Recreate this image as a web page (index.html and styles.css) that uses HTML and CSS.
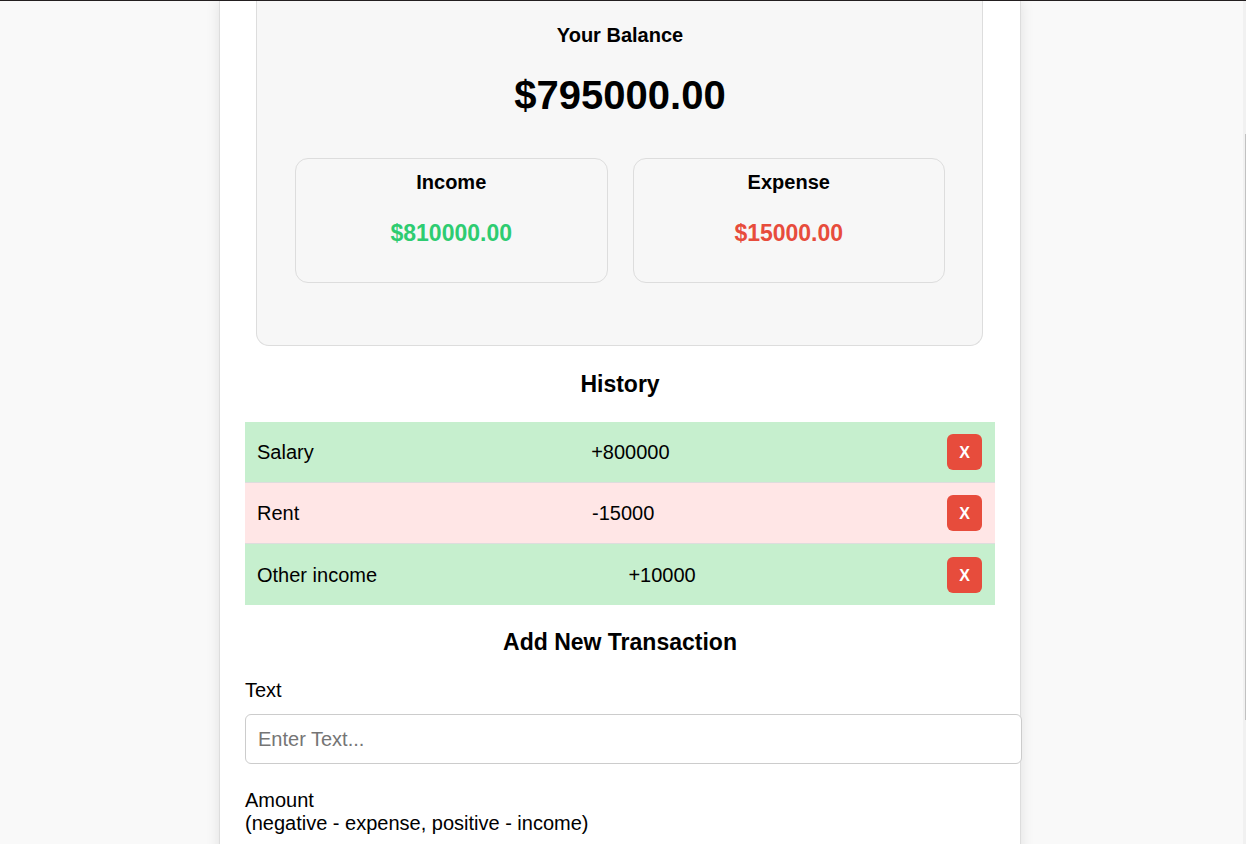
FILE: index.html
```html
<!DOCTYPE html>
<html lang="en">
<head>
<meta charset="utf-8">
<meta name="viewport" content="width=device-width, initial-scale=1">
<link rel="stylesheet" href="styles.css">
</head>
<body>
<main class="container">
  <section class="balance">
    <h2 class="label-title">Your Balance</h2>
    <p class="total">$795000.00</p>
    <div class="summary">
      <div class="card">
        <h3 class="label-title">Income</h3>
        <p class="money plus">$810000.00</p>
      </div>
      <div class="card">
        <h3 class="label-title">Expense</h3>
        <p class="money minus">$15000.00</p>
      </div>
    </div>
  </section>

  <h2 class="heading">History</h2>
  <ul class="history">
    <li class="item income"><span>Salary</span><span>+800000</span><button class="remove" type="button">X</button></li>
    <li class="item expense"><span>Rent</span><span>-15000</span><button class="remove" type="button">X</button></li>
    <li class="item income"><span>Other income</span><span>+10000</span><button class="remove" type="button">X</button></li>
  </ul>

  <h2 class="heading">Add New Transaction</h2>
  <form class="form">
    <div class="field">
      <label for="text">Text</label>
      <input class="input" id="text" type="text" placeholder="Enter Text...">
    </div>
    <div class="field">
      <label for="amount">Amount<br>(negative - expense, positive - income)</label>
      <input class="input" id="amount" type="text">
    </div>
  </form>
</main>
<div class="scrollbar"><div class="thumb"></div></div>
</body>
</html>
```
FILE: styles.css
```css
html {
  overflow: hidden;
  background: #f9f9f9;
}

body {
  margin: 0;
  padding-right: 6px;
  height: 100vh;
  box-sizing: border-box;
  overflow: hidden;
  border-top: 1px solid #231f20;
  background: #f9f9f9;
  color: #000;
  font-family: "Liberation Sans", Arial, sans-serif;
  font-size: 20px;
  line-height: 23px;
}

h2,
h3,
p,
ul {
  margin: 0;
  padding: 0;
}

.container {
  max-width: 750px;
  min-height: 100vh;
  margin: 0 auto;
  padding: 0 25px;
  background: #fff;
  border: solid #ddd;
  border-width: 0 1px;
  box-shadow: 0 0 13px rgba(0, 0, 0, 0.1);
}

.balance {
  margin: 0 12px 0 11px;
  padding: 23px 37px 62px 38px;
  background: #f7f7f7;
  border: 1px solid #ddd;
  border-top: 0;
  border-radius: 0 0 13px 13px;
  text-align: center;
}

.label-title {
  font-size: 20px;
  line-height: 23px;
}

.total {
  margin: 25px 0 40px;
  font-size: 40px;
  font-weight: bold;
  line-height: 46px;
}

.summary {
  display: grid;
  grid-template-columns: 1fr 1fr;
  gap: 25px;
}

.card {
  padding: 12px 12px 36px;
  border: 1px solid #ddd;
  border-radius: 13px;
}

.money {
  margin-top: 26px;
  font-size: 23px;
  font-weight: bold;
  line-height: 26px;
}

.plus {
  color: #2ecc71;
}

.minus {
  color: #e74c3c;
}

.heading {
  margin: 25px 0;
  font-size: 23px;
  line-height: 26px;
  text-align: center;
}

.history + .heading {
  margin: 24px 0;
}

.history {
  list-style: none;
}

.item {
  display: flex;
  align-items: center;
  justify-content: space-between;
  padding: 12px 13px 12px 12px;
  border-bottom: 1px solid #ddd;
}

.item:last-child {
  padding-top: 13px;
  border-bottom: 0;
}

.income {
  background: #c6efce;
}

.expense {
  background: #ffe6e6;
}

.remove {
  width: 35px;
  height: 36px;
  padding: 2px 0 0;
  border: 0;
  border-radius: 6px;
  background: #e74c3c;
  color: #fff;
  font-family: inherit;
  font-size: 16px;
  font-weight: bold;
}

.field {
  margin-bottom: 25px;
}

.field label {
  display: block;
  margin-bottom: 12px;
}

.input {
  display: block;
  width: 100%;
  height: 24px;
  padding: 12px 13px 12px 12px;
  border: 1px solid #ccc;
  border-radius: 6px;
  background: #fff;
  font-family: inherit;
  font-size: 20px;
}

.input::placeholder {
  color: #757575;
}

.scrollbar {
  position: absolute;
  top: 1px;
  right: 0;
  bottom: 0;
  width: 3px;
  background: #f1f1f1;
}

.thumb {
  position: absolute;
  top: 133px;
  right: 0;
  width: 1px;
  height: 586px;
  background: #c1c1c1;
}
```
